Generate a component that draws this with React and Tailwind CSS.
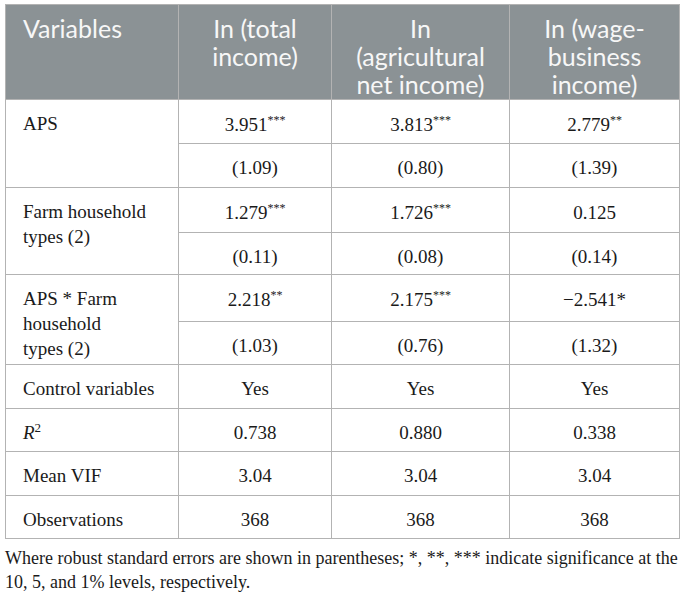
import React from "react";

const serif = { fontFamily: '"Liberation Serif", "Times New Roman", serif' };

function Stars({ n }) {
  return <sup className="text-[12px]" style={{ verticalAlign: "0.6em", lineHeight: 0, top: 0 }}>{n}</sup>;
}

const rows = [
  { label: ["APS"], vals: [["3.951", "***"], ["3.813", "***"], ["2.779", "**"]], se: ["(1.09)", "(0.80)", "(1.39)"], h: [44, 44] },
  { label: ["Farm household", "types (2)"], vals: [["1.279", "***"], ["1.726", "***"], ["0.125", ""]], se: ["(0.11)", "(0.08)", "(0.14)"], h: [45, 42] },
  { label: ["APS * Farm", "household", "types (2)"], vals: [["2.218", "**"], ["2.175", "***"], ["−2.541*", ""]], se: ["(1.03)", "(0.76)", "(1.32)"], h: [46, 43] },
];

const simple = [
  { label: "Control variables", vals: ["Yes", "Yes", "Yes"], h: 44 },
  { label: "R2", vals: ["0.738", "0.880", "0.338"], h: 43 },
  { label: "Mean VIF", vals: ["3.04", "3.04", "3.04"], h: 44 },
  { label: "Observations", vals: ["368", "368", "368"], h: 43 },
];

export default function App() {
  const cellB = "border border-[#b3b3b3]";
  return (
    <div className="bg-white w-[684px] h-[597px] pl-[5px] pt-[4px]" style={serif}>
      <table className="table-fixed border-collapse w-[674px] text-[19px] leading-[25px] text-[#1a1a1a]">
        <colgroup>
          <col className="w-[173px]" />
          <col className="w-[153px]" />
          <col className="w-[178px]" />
          <col className="w-[170px]" />
        </colgroup>
        <thead>
          <tr className="bg-[#8b9295] text-[#f7f7f7] text-[25px] leading-[28px]" style={{ fontFamily: 'Lato, "Noto Sans", sans-serif' }}>
            <th className={`${cellB} h-[95px] align-top text-left font-normal pl-[17px] pt-[9px]`}>Variables</th>
            <th className={`${cellB} align-top text-center font-normal pt-[9px] px-[4px]`}>In (total<br />income)</th>
            <th className={`${cellB} align-top text-center font-normal pt-[9px] px-[4px]`}>In<br />(agricultural<br />net income)</th>
            <th className={`${cellB} align-top text-center font-normal pt-[9px] px-[4px]`}>In (wage-<br />business<br />income)</th>
          </tr>
        </thead>
        <tbody>
          {rows.map((r, i) => (
            <React.Fragment key={i}>
              <tr>
                <td rowSpan={2} className={`${cellB} align-top pl-[17px] pt-[11px] pb-[3px]`}>
                  {r.label.map((l, j) => (
                    <div key={j}>{l}</div>
                  ))}
                </td>
                {r.vals.map((v, j) => (
                  <td key={j} className={`${cellB} text-center align-top pt-[12px]`} style={{ height: r.h[0] }}>
                    {v[0]}
                    {v[1] && <Stars n={v[1]} />}
                  </td>
                ))}
              </tr>
              <tr>
                {r.se.map((s, j) => (
                  <td key={j} className={`${cellB} text-center align-top pt-[11px]`} style={{ height: r.h[1] }}>
                    {s}
                  </td>
                ))}
              </tr>
            </React.Fragment>
          ))}
          {simple.map((r, i) => (
            <tr key={i}>
              <td className={`${cellB} align-top pl-[17px] pt-[11px]`} style={{ height: r.h }}>
                {r.label === "R2" ? (
                  <span>
                    <i>R</i>
                    <sup className="text-[13px]" style={{ verticalAlign: "0.55em", lineHeight: 0, top: 0 }}>2</sup>
                  </span>
                ) : (
                  r.label
                )}
              </td>
              {r.vals.map((v, j) => (
                <td key={j} className={`${cellB} text-center align-top pt-[11px]`}>
                  {v}
                </td>
              ))}
            </tr>
          ))}
        </tbody>
      </table>
      <p className="text-[18px] leading-[24px] text-[#1a1a1a] mt-[7px] whitespace-nowrap">
        Where robust standard errors are shown in parentheses; *, **, *** indicate significance at the
        <br />
        10, 5, and 1% levels, respectively.
      </p>
    </div>
  );
}
